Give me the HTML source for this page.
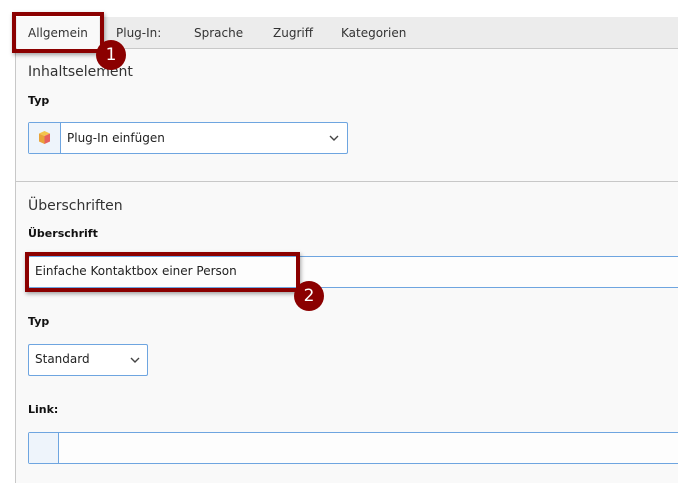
<!DOCTYPE html>
<html><head><style>
body{margin:0;width:678px;height:483px;background:#fff;position:relative;overflow:hidden;font-family:"DejaVu Sans",Verdana,sans-serif;color:#222}
.a{position:absolute}
.tabs{left:15px;top:17px;width:663px;height:31px;background:#ececec;border-bottom:1px solid #c8c8c8}
.tab{top:18px;height:31px;line-height:31px;font-size:12px;color:#333}
.panel{left:15px;top:49px;width:663px;height:434px;background:#f9f9f9;border-left:1px solid #c8c8c8}
.h{font-size:14px;color:#333}
.b{font-size:11px;font-weight:bold;color:#111}
.inp{background:#fdfdfd;border:1px solid #6ea5e0;box-sizing:border-box;border-radius:2px}
.red{border:4px solid #8b0000;box-sizing:border-box;box-shadow:1px 2px 4px rgba(0,0,0,.35)}
.badge{width:30px;height:30px;border-radius:50%;background:#8b0000;color:#fff;font-size:17px;text-align:center;line-height:30px}
</style></head><body>
<div class="a tabs"></div>
<div class="a" style="left:17px;top:17px;width:82px;height:32px;background:#f9f9f9"></div>
<div class="a tab" style="left:28px">Allgemein</div>
<div class="a tab" style="left:116px">Plug-In:</div>
<div class="a tab" style="left:194px">Sprache</div>
<div class="a tab" style="left:273px">Zugriff</div>
<div class="a tab" style="left:341px">Kategorien</div>
<div class="a panel"></div>
<div class="a h" style="left:28px;top:64px">Inhaltselement</div>
<div class="a b" style="left:28px;top:94px">Typ</div>
<div class="a inp" style="left:28px;top:122px;width:320px;height:32px;background:#fff"></div>
<div class="a" style="left:29px;top:123px;width:31px;height:30px;background:#eef4fb;border-right:1px solid #6ea5e0"></div>
<svg class="a" style="left:37px;top:130px" width="15" height="15" viewBox="0 0 15 15"><path d="M7.5 1L13 3.5 7.5 6 2 3.5Z" fill="#f3c44d"/><path d="M2 3.5L7.5 6V14L2 11.5Z" fill="#e8a33a"/><path d="M13 3.5L7.5 6V14L13 11.5Z" fill="#e8605e"/></svg>
<div class="a" style="left:67px;top:131px;font-size:12px">Plug-In einfügen</div>
<svg class="a" style="left:329px;top:135px" width="10" height="7"><path d="M1 1L5 5 9 1" stroke="#444" stroke-width="1.4" fill="none"/></svg>
<div class="a" style="left:16px;top:181px;width:662px;height:1px;background:#c8c8c8"></div>
<div class="a h" style="left:28px;top:198px">Überschriften</div>
<div class="a b" style="left:28px;top:227px">Überschrift</div>
<div class="a inp" style="left:28px;top:256px;width:660px;height:32px"></div>
<div class="a" style="left:35px;top:264px;font-size:12px">Einfache Kontaktbox einer Person</div>
<div class="a b" style="left:28px;top:315px">Typ</div>
<div class="a inp" style="left:28px;top:344px;width:120px;height:32px;background:#fff"></div>
<div class="a" style="left:35px;top:352px;font-size:12px">Standard</div>
<svg class="a" style="left:130px;top:357px" width="10" height="7"><path d="M1 1L5 5 9 1" stroke="#444" stroke-width="1.4" fill="none"/></svg>
<div class="a b" style="left:28px;top:403px">Link:</div>
<div class="a inp" style="left:28px;top:432px;width:660px;height:32px"></div>
<div class="a" style="left:29px;top:433px;width:29px;height:30px;background:#eef4fb;border-right:1px solid #6ea5e0"></div>
<div class="a red" style="left:12px;top:12px;width:92px;height:41px"></div>
<div class="a badge" style="left:96px;top:40px">1</div>
<div class="a red" style="left:25px;top:252px;width:275px;height:40px"></div>
<div class="a badge" style="left:294px;top:281px">2</div>
</body></html>
